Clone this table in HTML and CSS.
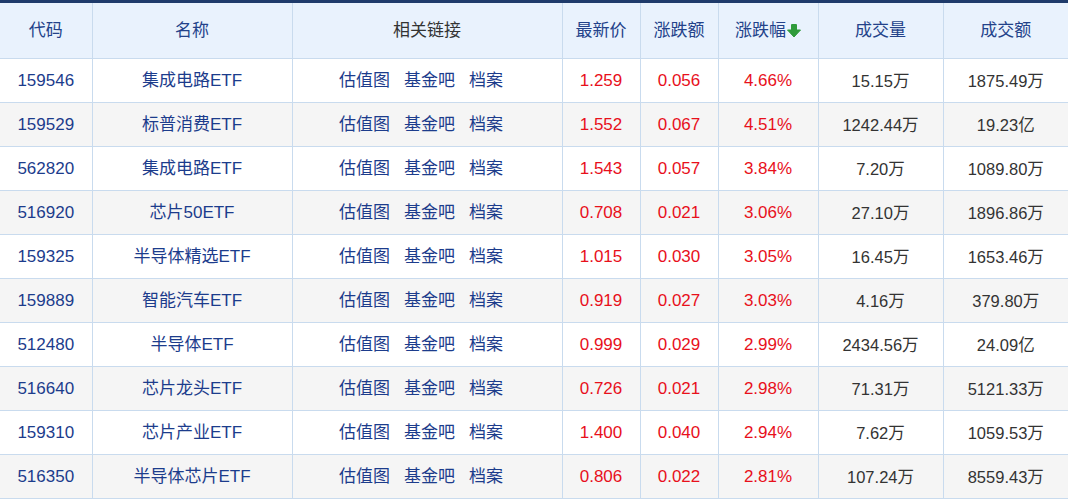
FILE: index.html
```html
<!DOCTYPE html>
<html lang="zh-CN">
<head>
<meta charset="utf-8">
<title>ETF 涨幅榜</title>
<link rel="stylesheet" href="styles.css">
</head>
<body>
<div class="wrap">
  <table class="grid">
    <colgroup>
      <col class="c-code"><col class="c-name"><col class="c-links"><col class="c-price"><col class="c-chg"><col class="c-pct"><col class="c-vol"><col class="c-amt">
    </colgroup>
    <thead>
      <tr>
        <th class="sort">代码</th>
        <th class="sort">名称</th>
        <th class="plain">相关链接</th>
        <th class="sort">最新价</th>
        <th class="sort">涨跌额</th>
        <th class="sort">涨跌幅<svg class="arrow" width="14" height="15" viewBox="0 0 14 15"><rect x="4" y="1" width="6" height="7" rx="1" fill="#2f9b3b"/><path d="M0.5 7 H13.5 L7 14 Z" fill="#2f9b3b" stroke="#2f9b3b" stroke-width="1" stroke-linejoin="round"/></svg></th>
        <th class="sort">成交量</th>
        <th class="sort">成交额</th>
      </tr>
    </thead>
    <tbody>
      <tr><td class="code">159546</td><td class="name">集成电路ETF</td><td class="links"><a>估值图</a><a>基金吧</a><a>档案</a></td><td class="up">1.259</td><td class="up">0.056</td><td class="up">4.66%</td><td class="num">15.15万</td><td class="num">1875.49万</td></tr>
      <tr><td class="code">159529</td><td class="name">标普消费ETF</td><td class="links"><a>估值图</a><a>基金吧</a><a>档案</a></td><td class="up">1.552</td><td class="up">0.067</td><td class="up">4.51%</td><td class="num">1242.44万</td><td class="num">19.23亿</td></tr>
      <tr><td class="code">562820</td><td class="name">集成电路ETF</td><td class="links"><a>估值图</a><a>基金吧</a><a>档案</a></td><td class="up">1.543</td><td class="up">0.057</td><td class="up">3.84%</td><td class="num">7.20万</td><td class="num">1089.80万</td></tr>
      <tr><td class="code">516920</td><td class="name">芯片50ETF</td><td class="links"><a>估值图</a><a>基金吧</a><a>档案</a></td><td class="up">0.708</td><td class="up">0.021</td><td class="up">3.06%</td><td class="num">27.10万</td><td class="num">1896.86万</td></tr>
      <tr><td class="code">159325</td><td class="name">半导体精选ETF</td><td class="links"><a>估值图</a><a>基金吧</a><a>档案</a></td><td class="up">1.015</td><td class="up">0.030</td><td class="up">3.05%</td><td class="num">16.45万</td><td class="num">1653.46万</td></tr>
      <tr><td class="code">159889</td><td class="name">智能汽车ETF</td><td class="links"><a>估值图</a><a>基金吧</a><a>档案</a></td><td class="up">0.919</td><td class="up">0.027</td><td class="up">3.03%</td><td class="num">4.16万</td><td class="num">379.80万</td></tr>
      <tr><td class="code">512480</td><td class="name">半导体ETF</td><td class="links"><a>估值图</a><a>基金吧</a><a>档案</a></td><td class="up">0.999</td><td class="up">0.029</td><td class="up">2.99%</td><td class="num">2434.56万</td><td class="num">24.09亿</td></tr>
      <tr><td class="code">516640</td><td class="name">芯片龙头ETF</td><td class="links"><a>估值图</a><a>基金吧</a><a>档案</a></td><td class="up">0.726</td><td class="up">0.021</td><td class="up">2.98%</td><td class="num">71.31万</td><td class="num">5121.33万</td></tr>
      <tr><td class="code">159310</td><td class="name">芯片产业ETF</td><td class="links"><a>估值图</a><a>基金吧</a><a>档案</a></td><td class="up">1.400</td><td class="up">0.040</td><td class="up">2.94%</td><td class="num">7.62万</td><td class="num">1059.53万</td></tr>
      <tr><td class="code">516350</td><td class="name">半导体芯片ETF</td><td class="links"><a>估值图</a><a>基金吧</a><a>档案</a></td><td class="up">0.806</td><td class="up">0.022</td><td class="up">2.81%</td><td class="num">107.24万</td><td class="num">8559.43万</td></tr>
    </tbody>
  </table>
</div>
</body>
</html>
```
FILE: styles.css
```css
html, body {
  margin: 0;
  padding: 0;
  background: #ffffff;
}
body {
  font-family: "Liberation Sans", "Noto Sans CJK SC", sans-serif;
  font-size: 16.5px;
}
.wrap {
  width: 1068px;
  height: 500px;
  overflow: hidden;
  border-top: 3px solid #1f3b6b;
  box-sizing: border-box;
}
.grid {
  width: 1068px;
  border-collapse: collapse;
  table-layout: fixed;
}
.c-code { width: 92px; }
.c-name { width: 200px; }
.c-links { width: 270px; }
.c-price { width: 78px; }
.c-chg { width: 78px; }
.c-pct { width: 100px; }
.c-vol { width: 125px; }
.c-amt { width: 125px; }
.grid th, .grid td {
  border: 1px solid #c9dbee;
  text-align: center;
  padding: 1px 0 0;
  white-space: nowrap;
  line-height: 24px;
}
.grid tr > :first-child { border-left: none; }
.grid tr > :last-child { border-right: none; }
.grid thead tr { height: 55px; }
.grid thead th {
  border-top: none;
  background: #e9f2fd;
  font-weight: normal;
  font-size: 17px;
  color: #23428a;
}
.grid thead th.plain { color: #333333; }
.arrow {
  vertical-align: -2px;
  margin-left: 1px;
}
.grid tbody tr { height: 44px; }
.grid tbody tr:nth-child(even) td { background: #f5f5f5; }
.code, .name { color: #1c3c8c; }
.grid td.code { font-size: 17px; padding-top: 2px; }
.name { font-size: 17px; }
.grid td.links {
  font-size: 17px;
  padding-right: 12px;
}
.links a {
  color: #1c3c8c;
  margin: 0 7px;
}
.grid td.up { color: #e8101b; font-size: 17px; padding-top: 2px; }
.num { color: #333333; }
```
